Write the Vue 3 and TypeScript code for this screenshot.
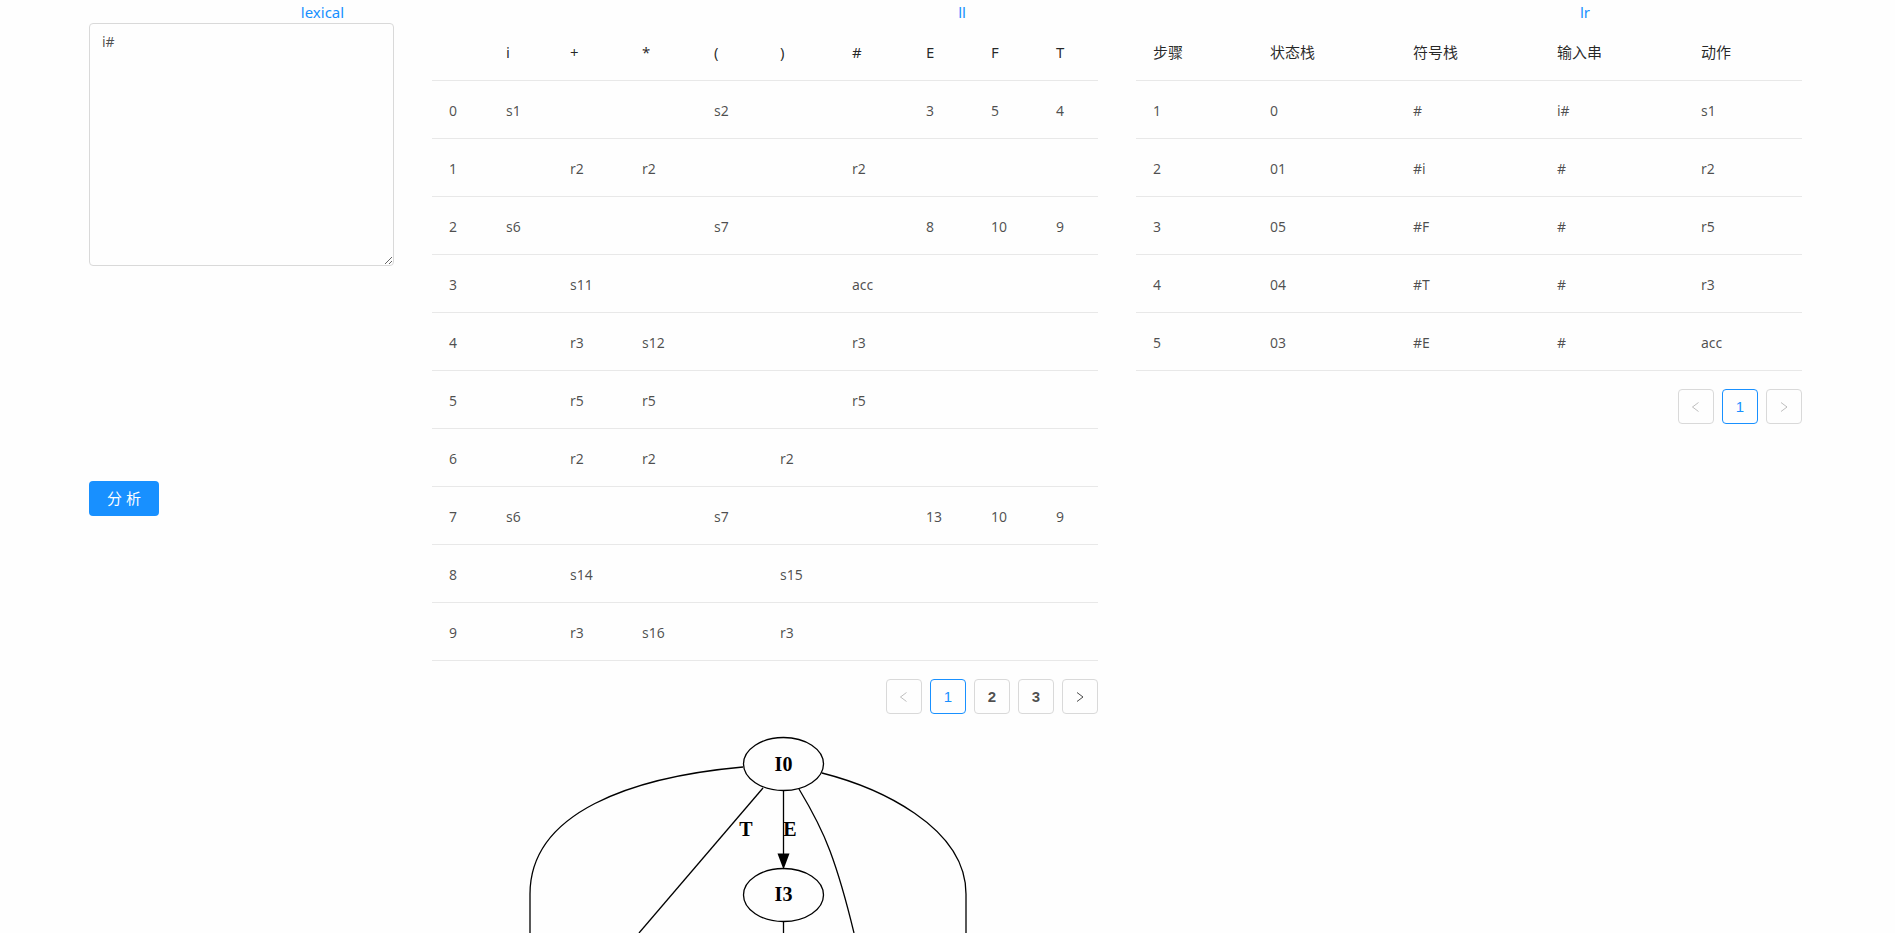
<script setup lang="ts">
import { ref } from 'vue'

interface Column {
  title: string
  width: number
}

const source = ref('i#')

const tabs = ['lexical', 'll', 'lr']

const actionColumns: Column[] = [
  { title: '', width: 57 },
  { title: 'i', width: 64 },
  { title: '+', width: 72 },
  { title: '*', width: 72 },
  { title: '(', width: 66 },
  { title: ')', width: 72 },
  { title: '#', width: 74 },
  { title: 'E', width: 65 },
  { title: 'F', width: 65 },
  { title: 'T', width: 59 },
]

const actionRows: string[][] = [
  ['0', 's1', '', '', 's2', '', '', '3', '5', '4'],
  ['1', '', 'r2', 'r2', '', '', 'r2', '', '', ''],
  ['2', 's6', '', '', 's7', '', '', '8', '10', '9'],
  ['3', '', 's11', '', '', '', 'acc', '', '', ''],
  ['4', '', 'r3', 's12', '', '', 'r3', '', '', ''],
  ['5', '', 'r5', 'r5', '', '', 'r5', '', '', ''],
  ['6', '', 'r2', 'r2', '', 'r2', '', '', '', ''],
  ['7', 's6', '', '', 's7', '', '', '13', '10', '9'],
  ['8', '', 's14', '', '', 's15', '', '', '', ''],
  ['9', '', 'r3', 's16', '', 'r3', '', '', '', ''],
]

const stepColumns: Column[] = [
  { title: '步骤', width: 117 },
  { title: '状态栈', width: 143 },
  { title: '符号栈', width: 144 },
  { title: '输入串', width: 144 },
  { title: '动作', width: 118 },
]

const stepRows: string[][] = [
  ['1', '0', '#', 'i#', 's1'],
  ['2', '01', '#i', '#', 'r2'],
  ['3', '05', '#F', '#', 'r5'],
  ['4', '04', '#T', '#', 'r3'],
  ['5', '03', '#E', '#', 'acc'],
]

const panels = [
  { id: 'action', label: 'Action table', columns: actionColumns, rows: actionRows, pages: 3 },
  { id: 'steps', label: 'Analysis steps', columns: stepColumns, rows: stepRows, pages: 1 },
]

const share = (column: Column, columns: Column[]) =>
  `${(column.width / columns.reduce((sum, c) => sum + c.width, 0)) * 100}%`
</script>

<template>
  <div class="page">
    <nav class="tabs">
      <a v-for="tab in tabs" :key="tab" :href="`#/${tab}`">{{ tab }}</a>
    </nav>

    <main class="content">
      <section class="editor">
        <textarea v-model="source" class="source" aria-label="Source" spellcheck="false"></textarea>
        <button type="button" class="analyse">分 析</button>
      </section>

      <section v-for="panel in panels" :key="panel.id" class="panel">
        <table :aria-label="panel.label">
          <colgroup>
            <col
              v-for="column in panel.columns"
              :key="column.title"
              :style="{ width: share(column, panel.columns) }"
            />
          </colgroup>
          <thead>
            <tr>
              <th v-for="column in panel.columns" :key="column.title" scope="col">{{ column.title }}</th>
            </tr>
          </thead>
          <tbody>
            <tr v-for="row in panel.rows" :key="row[0]">
              <td v-for="(cell, index) in row" :key="index">{{ cell }}</td>
            </tr>
          </tbody>
        </table>

        <nav class="pagination" :aria-label="`${panel.label} pages`">
          <button type="button" disabled aria-label="Previous page">
            <svg viewBox="0 0 12 12" aria-hidden="true"><path d="M8.5 1.5 2.5 6l6 4.5" /></svg>
          </button>
          <button
            v-for="page in panel.pages"
            :key="page"
            type="button"
            :class="{ current: page === 1 }"
          >{{ page }}</button>
          <button type="button" :disabled="panel.pages === 1" aria-label="Next page">
            <svg viewBox="0 0 12 12" aria-hidden="true"><path d="M3 1.5 9 6l-6 4.5" /></svg>
          </button>
        </nav>

        <svg v-if="panel.id === 'action'" class="graph" viewBox="0 0 666 201" role="img" aria-label="State graph">
          <g class="edges">
            <path d="M311 35C200 45 98 80 98 162V201" />
            <path d="M331 56 207 201" />
            <path d="M351.5 59V122" />
            <path d="M367 57C376 72 391 100 398 119C407 143 415 172 422 201" />
            <path d="M390 41C445 55 534 94 534 162V201" />
            <path d="M351.5 190V201" />
            <ellipse cx="351.5" cy="32" rx="40" ry="26.5" />
            <ellipse cx="351.5" cy="163" rx="40" ry="26.5" />
          </g>
          <path d="M345.5 121.5h12l-6 16z" />
          <text x="351.5" y="39">I0</text>
          <text x="351.5" y="169">I3</text>
          <text x="314" y="104">T</text>
          <text x="358" y="104">E</text>
        </svg>
      </section>
    </main>
  </div>
</template>

<style>
body {
  background: #fefefe;
}
</style>

<style scoped>
.page {
  color: rgba(0, 0, 0, 0.7);
  font: 14px/21px 'Noto Sans', 'Noto Sans CJK SC', sans-serif;
}

.tabs {
  display: grid;
  grid-template-columns: 645fr 634fr 612fr;
  justify-items: center;
  height: 23px;
  padding-right: 4px;
  line-height: 25px;
}

.tabs a {
  color: #1890ff;
  font-size: 15px;
  text-decoration: none;
}

.content {
  display: grid;
  grid-template-columns: 305fr 666fr 666fr;
  gap: 38px;
  padding: 0 93px 0 89px;
}

.editor {
  display: flex;
  flex-direction: column;
  align-items: flex-start;
  gap: 215px;
}

.source {
  box-sizing: border-box;
  width: 100%;
  height: 243px;
  padding: 6px 12px;
  border: 1px solid #d9d9d9;
  border-radius: 4px;
  background: transparent;
  color: inherit;
  font: inherit;
  line-height: 24px;
  resize: vertical;
  outline: none;
}

.analyse {
  height: 35px;
  padding: 0 18px;
  border: 0;
  border-radius: 4px;
  background: #1890ff;
  color: #fff;
  font: inherit;
  font-size: 15px;
}

.panel {
  min-width: 0;
}

table {
  width: 100%;
  table-layout: fixed;
  border-collapse: separate;
  border-spacing: 0;
}

th,
td {
  height: 21px;
  padding: 19px 0 17px 17px;
  border-bottom: 1px solid #e8e8e8;
  text-align: left;
  white-space: nowrap;
}

th {
  color: rgba(0, 0, 0, 0.85);
  font-size: 15px;
  font-weight: 400;
}

.pagination {
  display: flex;
  justify-content: flex-end;
  gap: 8px;
  margin: 18px 0;
}

.pagination button {
  display: flex;
  align-items: center;
  justify-content: center;
  width: 36px;
  height: 35px;
  padding: 0;
  border: 1px solid #d9d9d9;
  border-radius: 4px;
  background: transparent;
  color: rgba(0, 0, 0, 0.7);
  font: bold 15px 'Liberation Sans', Arial, sans-serif;
}

.pagination .current {
  border-color: #1890ff;
  color: #1890ff;
  font-weight: 400;
}

.pagination button:disabled {
  color: rgba(0, 0, 0, 0.25);
}

.pagination svg {
  width: 12px;
  height: 12px;
  fill: none;
  stroke: currentColor;
}

.graph {
  display: block;
  width: 100%;
  font: bold 20px 'Liberation Serif', 'Times New Roman', serif;
  text-anchor: middle;
}

.edges {
  fill: none;
  stroke: #000;
  stroke-width: 1.3;
}
</style>
